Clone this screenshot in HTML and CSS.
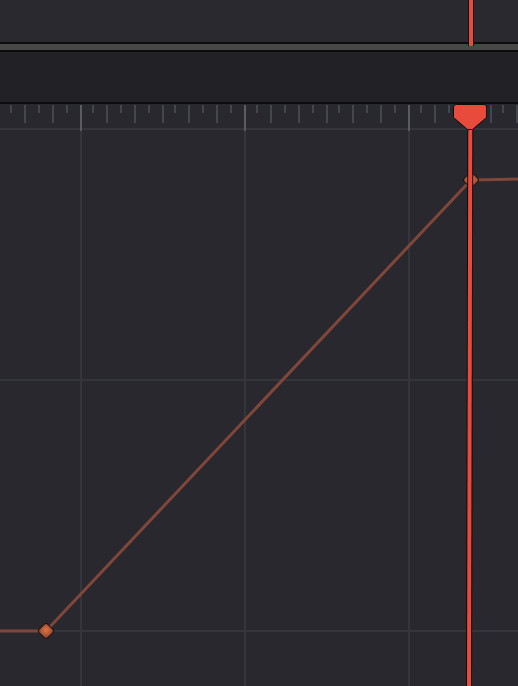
FILE: index.html
```html
<!DOCTYPE html>
<html lang="en">
<head>
<meta charset="utf-8">
<title>Curve editor</title>
<link rel="stylesheet" href="styles.css">
</head>
<body>
<div class="editor">
  <div class="track-panel"></div>
  <div class="splitter"></div>
  <div class="header-panel"></div>

  <!-- timeline ruler: minor ticks alternate short/long, major every 164px -->
  <svg class="ruler" width="518" height="24" viewBox="0 0 518 24">
    <g class="tick-short">
      <rect x="10" y="1" width="2" height="8"/>
      <rect x="38" y="1" width="2" height="8"/>
      <rect x="66" y="1" width="2" height="8"/>
      <rect x="92" y="1" width="2" height="8"/>
      <rect x="120" y="1" width="2" height="8"/>
      <rect x="148" y="1" width="2" height="8"/>
      <rect x="174" y="1" width="2" height="8"/>
      <rect x="202" y="1" width="2" height="8"/>
      <rect x="230" y="1" width="2" height="8"/>
      <rect x="256" y="1" width="2" height="8"/>
      <rect x="284" y="1" width="2" height="8"/>
      <rect x="312" y="1" width="2" height="8"/>
      <rect x="338" y="1" width="2" height="8"/>
      <rect x="366" y="1" width="2" height="8"/>
      <rect x="394" y="1" width="2" height="8"/>
      <rect x="420" y="1" width="2" height="8"/>
      <rect x="448" y="1" width="2" height="8"/>
      <rect x="476" y="1" width="2" height="8"/>
      <rect x="502" y="1" width="2" height="8"/>
    </g>
    <g class="tick-long">
      <rect x="24" y="1" width="2" height="18"/>
      <rect x="52" y="1" width="2" height="18"/>
      <rect x="106" y="1" width="2" height="18"/>
      <rect x="134" y="1" width="2" height="18"/>
      <rect x="162" y="1" width="2" height="18"/>
      <rect x="188" y="1" width="2" height="18"/>
      <rect x="216" y="1" width="2" height="18"/>
      <rect x="270" y="1" width="2" height="18"/>
      <rect x="298" y="1" width="2" height="18"/>
      <rect x="326" y="1" width="2" height="18"/>
      <rect x="352" y="1" width="2" height="18"/>
      <rect x="380" y="1" width="2" height="18"/>
      <rect x="434" y="1" width="2" height="18"/>
      <rect x="462" y="1" width="2" height="18"/>
      <rect x="490" y="1" width="2" height="18"/>
      <rect x="516" y="1" width="2" height="18"/>
    </g>
    <g class="tick-major">
      <rect x="80" y="1" width="2" height="23"/>
      <rect x="244" y="1" width="2" height="23"/>
      <rect x="408" y="1" width="2" height="23"/>
    </g>
  </svg>

  <!-- curve graph -->
  <svg class="graph" width="518" height="558" viewBox="0 0 518 558">
    <defs>
      <radialGradient id="key-fill" cx="0.45" cy="0.45" r="0.6">
        <stop offset="0" stop-color="#dc7444"/>
        <stop offset="0.55" stop-color="#b85c38"/>
        <stop offset="1" stop-color="#8e4730"/>
      </radialGradient>
    </defs>
    <g class="grid">
      <rect x="0" y="0" width="518" height="2"/>
      <rect x="0" y="251" width="518" height="2"/>
      <rect x="0" y="502" width="518" height="2"/>
      <rect x="80" y="0" width="2" height="558"/>
      <rect x="244" y="0" width="2" height="558"/>
      <rect x="408" y="0" width="2" height="558"/>
    </g>
    <g class="grid-top">
      <rect x="80" y="0" width="2" height="3"/>
      <rect x="244" y="0" width="2" height="3"/>
      <rect x="408" y="0" width="2" height="3"/>
    </g>
    <polyline class="curve" points="0,503 46,503 471,52 518,51"/>
    <rect class="key" x="40" y="497" width="12" height="12" rx="2.5" transform="rotate(45 46 503)"/>
    <rect class="key" x="465" y="46" width="12" height="12" rx="2.5" transform="rotate(45 471 52)"/>
  </svg>
</div>

<!-- playhead drawn over the ruler and graph -->
<svg class="playhead" width="518" height="686" viewBox="0 0 518 686">
  <rect class="ph-edge" x="468" y="0" width="6" height="46"/>
  <rect class="ph-fill" x="469" y="0" width="4" height="46"/>
  <line class="ph-line-edge" x1="470.3" y1="126" x2="469" y2="686"/>
  <line class="ph-line" x1="470.3" y1="126" x2="469" y2="686"/>
  <path class="ph-head" d="M456.5,104.5 H484 Q486.5,104.5 486.5,107 V117.5 L472.5,129.5 H467.5 L453.5,117.5 V107 Q453.5,104.5 456.5,104.5 Z"/>
</svg>
</body>
</html>
```
FILE: styles.css
```css
html, body {
  margin: 0;
  padding: 0;
  background: #28282e;
}

body {
  position: relative;
  width: 518px;
  height: 686px;
  overflow: hidden;
}

.editor {
  display: flex;
  flex-direction: column;
  width: 518px;
  height: 686px;
}

.track-panel {
  height: 42px;
  background: #29292f;
  border-bottom: 2px solid #0c0c0d;
  flex: none;
}

.splitter {
  height: 6px;
  background: #474846;
  border-bottom: 2px solid #0c0c0d;
  flex: none;
}

.header-panel {
  height: 50px;
  background: #222226;
  border-bottom: 2px solid #0c0c0d;
  flex: none;
}

.ruler {
  display: block;
  flex: none;
  background: #28282e;
}

.tick-short rect,
.tick-long rect {
  fill: #43464c;
}

.tick-major rect {
  fill: #595c63;
}

.graph {
  display: block;
  flex: none;
  background: #28282e;
}

.grid rect {
  fill: #35353c;
}

.grid-top rect {
  fill: #595c63;
}

.curve {
  fill: none;
  stroke: #80463a;
  stroke-width: 3;
  stroke-linejoin: round;
}

.key {
  fill: url(#key-fill);
  stroke: #1c1412;
  stroke-width: 1;
}

.playhead {
  position: absolute;
  left: 0;
  top: 0;
  pointer-events: none;
}

.ph-edge {
  fill: #0d0d0e;
}

.ph-fill {
  fill: #e84b3c;
}

.ph-line-edge {
  stroke: #0d0d0e;
  stroke-width: 6;
}

.ph-line {
  stroke: #e84b3c;
  stroke-width: 4;
}

.ph-head {
  fill: #e84b3c;
  stroke: #0d0d0e;
  stroke-width: 1;
}
```
